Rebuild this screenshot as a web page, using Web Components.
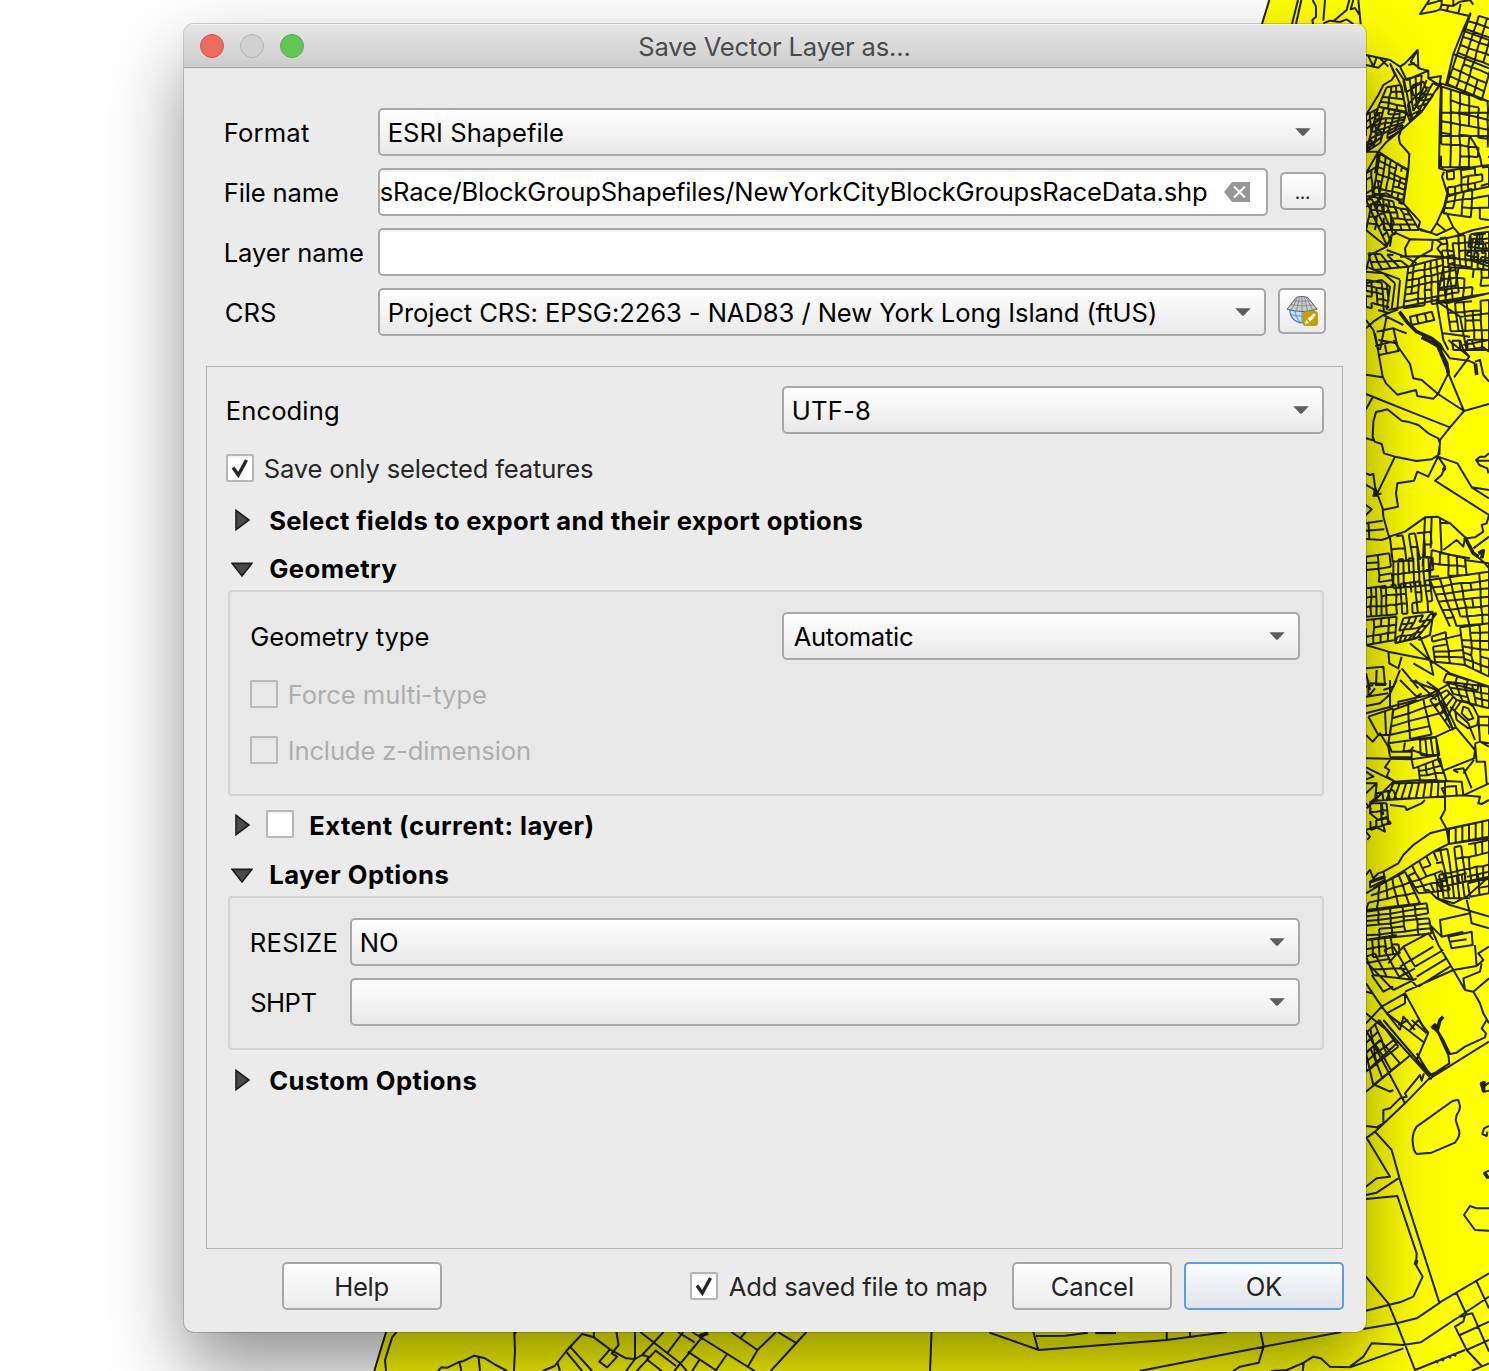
<!DOCTYPE html>
<html lang="en">
<head>
<meta charset="utf-8">
<title>Save Vector Layer as...</title>
<style>
html,body{margin:0;height:100%;overflow:hidden;background:#fff}
body{font-family:Inter,"Liberation Sans",sans-serif;font-size:25.6px;color:#000}
</style>
</head>
<body>
<map-desktop>
  <dialog-window>
    <ui-label slot="title" w="271">Save Vector Layer as...</ui-label>

    <form-row label="Format" lw="84"><combo-box tw="174" text="ESRI Shapefile" style="flex:1"></combo-box></form-row>
    <form-row label="File name" lw="113">
      <line-edit tw="827" text="sRace/BlockGroupShapefiles/NewYorkCityBlockGroupsRaceData.shp" clearable style="flex:1;margin-right:12px"></line-edit>
      <push-button style="width:46px;height:38px;margin-bottom:2px"><ui-label w="14" size="19" style="margin:1px 2px 0 0">...</ui-label></push-button>
    </form-row>
    <form-row label="Layer name" lw="138"><line-edit text="" style="flex:1"></line-edit></form-row>
    <form-row label="CRS" lw="50">
      <combo-box tw="766" text="Project CRS: EPSG:2263 - NAD83 / New York Long Island (ftUS)" style="flex:1;margin-right:12px"></combo-box>
      <push-button style="width:48px;height:46px;align-self:flex-start"><globe-icon></globe-icon></push-button>
    </form-row>

    <scroll-frame slot="options">
      <split-row label="Encoding" lw="111" lead="20" style="padding-right:18px"><combo-box tw="77" text="UTF-8" style="width:542px"></combo-box></split-row>
      <check-box checked tw="329" text="Save only selected features" style="margin:20px 0 0 19px"></check-box>
      <tree-header tw="593" text="Select fields to export and their export options" style="margin-top:14px"></tree-header>
      <tree-header open tw="127" text="Geometry"></tree-header>
      <group-panel style="height:206px;margin-top:-2px">
        <split-row label="Geometry type" lw="178" lead="20.5" style="padding-right:22px"><combo-box tw="120" text="Automatic" style="width:518px"></combo-box></split-row>
        <check-box disabled tw="197" text="Force multi-type" style="margin:20px 0 0 20px"></check-box>
        <check-box disabled tw="241" text="Include z-dimension" style="margin:28px 0 0 20px"></check-box>
      </group-panel>
      <tree-header box tw="283" text="Extent (current: layer)" style="margin-top:5px"></tree-header>
      <tree-header open tw="179" text="Layer Options" style="margin-top:1px"></tree-header>
      <group-panel style="height:154px;margin-top:-2px">
        <split-row label="RESIZE" lw="85.5" lead="21" style="padding-right:22px"><combo-box tw="37" text="NO" style="width:950px"></combo-box></split-row>
        <split-row label="SHPT" lw="66" lead="20.5" style="padding-right:22px;margin-top:12px"><combo-box text="" style="width:950px"></combo-box></split-row>
      </group-panel>
      <tree-header tw="207" text="Custom Options" style="margin-top:6px"></tree-header>
    </scroll-frame>

    <push-button slot="footer" style="width:160px"><ui-label w="53">Help</ui-label></push-button>
    <check-box slot="footer" checked tw="259" text="Add saved file to map" style="margin-left:248px;margin-right:25px"></check-box>
    <push-button slot="footer" style="width:160px"><ui-label w="82">Cancel</ui-label></push-button>
    <push-button slot="footer" primary style="width:160px;margin-left:12px"><ui-label w="36">OK</ui-label></push-button>
  </dialog-window>
</map-desktop>

<script>
const attr = (el, name, fallback = '') => el.hasAttribute(name) ? el.getAttribute(name) : fallback;
function define(name, render) {
  customElements.define(name, class extends HTMLElement {
    constructor() { super(); this.attachShadow({ mode: 'open' }); }
    connectedCallback() { this.shadowRoot.innerHTML = render(this); }
  });
}

/* Text run whose tracking is adjusted so that its ink spans exactly "w" pixels. */
const pen = document.createElement('canvas').getContext('2d');
customElements.define('ui-label', class extends HTMLElement {
  constructor() { super(); this.attachShadow({ mode: 'open' }); }
  connectedCallback() {
    const size = +attr(this, 'size', '25.6'), weight = attr(this, 'weight', '400'), w = +attr(this, 'w', '0');
    const text = this.textContent.trim();
    pen.font = `${weight} ${size}px Inter, "Liberation Sans", sans-serif`;
    const m = pen.measureText(text);
    const ink = m.actualBoundingBoxLeft + m.actualBoundingBoxRight;
    const ls = text.length > 1 && w ? (w - .8 - ink) / (text.length - 1) : 0;
    const nudge = weight === '700' ? 1.2 : .7;
    this.shadowRoot.innerHTML = `<style>
      :host{display:inline-block;flex:none;width:${w}px;height:30px;line-height:30px;white-space:nowrap;font-size:${size}px;font-weight:${weight};letter-spacing:${ls.toFixed(4)}px;position:relative;top:1px}
      span{display:inline-block;margin-left:${(m.actualBoundingBoxLeft + nudge).toFixed(2)}px}
    </style><span><slot></slot></span>`;
  }
});

define('form-row', el => `<style>
  :host{display:flex;align-items:center;height:48px;margin-bottom:12px}
  .l{display:flex;width:153px;padding-left:1px;flex:none}
  </style><div class="l"><ui-label w="${attr(el,'lw')}">${attr(el,'label')}</ui-label></div><slot></slot>`);

define('split-row', el => `<style>
  :host{display:flex;align-items:center;justify-content:space-between;height:48px;padding-left:${attr(el,'lead','0')}px}
  </style><ui-label w="${attr(el,'lw')}">${attr(el,'label')}</ui-label><slot></slot>`);

define('combo-box', el => `<style>
  :host{display:flex;align-items:center;justify-content:space-between;box-sizing:border-box;height:48px;flex:none;
    border:2px solid #a8a8a8;border-radius:5px;background:linear-gradient(#fff,#e9e9e9);padding:0 13px 0 9px}
  </style>${attr(el,'text') ? `<ui-label w="${attr(el,'tw')}">${attr(el,'text')}</ui-label>` : '<i></i>'}
  <svg width="16" height="8" viewBox="0 0 16 8"><path d="M.3.2H15.7L9 7.4Q8 8.2 7 7.4Z" fill="#5d5d5d"/></svg>`);

define('line-edit', el => `<style>
  :host{display:flex;align-items:center;justify-content:space-between;box-sizing:border-box;height:48px;
    border:2px solid #a8a8a8;border-radius:5px;background:#fff;box-shadow:inset 0 2px 1px #eee;padding:0 16px 2px 0;overflow:hidden}
  </style>${attr(el,'text') ? `<ui-label w="${attr(el,'tw')}">${attr(el,'text')}</ui-label>` : ''}
  ${el.hasAttribute('clearable') ? `<svg width="26" height="20" viewBox="0 0 26 20" style="margin-top:1px"><path d="M8 0H26V20H8L0 10Z" fill="#969696"/><path d="M10 4.5 21 15.5M21 4.5 10 15.5" stroke="#fff" stroke-width="2"/></svg>` : ''}`);

define('push-button', el => `<style>
  :host{display:flex;align-items:center;justify-content:center;box-sizing:border-box;flex:none;height:48px;color:#232323;
    border:2px solid ${el.hasAttribute('primary') ? '#5a9ee6' : '#a8a8a8'};border-radius:5px;
    background:linear-gradient(${el.hasAttribute('primary') ? '#fcfdfe,#dfe3ea' : '#fff,#ebebeb'})}
  </style><slot></slot>`);

define('tick-box', el => {
  const off = el.hasAttribute('disabled');
  return `<style>
  :host{display:block;box-sizing:border-box;width:28px;height:28px;flex:none;border:2px solid ${off ? '#b9b9b9' : '#b7b7b7'};border-radius:2px;
    background:${off ? '#e9e9e9' : '#fff'};box-shadow:inset 0 2px 1px ${off ? '#e1e1e1' : '#f3f3f3'}}
  svg{display:block}
  </style>${el.hasAttribute('checked') ? `<svg width="24" height="24" viewBox="0 0 24 24"><path d="M5 11.5 10.3 19 18.5 4" fill="none" stroke="#262626" stroke-width="3.4"/></svg>` : ''}`;
});

define('check-box', el => `<style>
  :host{display:flex;align-items:center;height:28px;gap:${el.hasAttribute('disabled') ? 11 : 10}px;color:${el.hasAttribute('disabled') ? '#aeaeae' : '#262626'}}
  </style><tick-box ${el.hasAttribute('checked') ? 'checked' : ''} ${el.hasAttribute('disabled') ? 'disabled' : ''}></tick-box><ui-label w="${attr(el,'tw')}">${attr(el,'text')}</ui-label>`);

define('tree-header', el => `<style>
  :host{display:flex;align-items:center;height:48px}
  .arrow{width:38px;padding-left:24px;flex:none;display:flex}
  .down{margin-top:3px}
  tick-box{margin:-3px 15px 0 -3px}
  </style><div class="arrow">${el.hasAttribute('open')
    ? '<svg class="down" width="22" height="16" viewBox="0 0 22 16"><path d="M1.2 1.4H20.8L11 14Z" fill="#4a4a4a" stroke="#1e1e1e" stroke-width="1.6"/></svg>'
    : '<svg width="22" height="22" viewBox="0 0 22 22"><path d="M5 1.3V20.7L18 11Z" fill="#4a4a4a" stroke="#1e1e1e" stroke-width="1.6"/></svg>'}</div>
  ${el.hasAttribute('box') ? '<tick-box></tick-box>' : ''}<ui-label weight="700" w="${attr(el,'tw')}">${attr(el,'text')}</ui-label>`);

define('group-panel', () => `<style>
  :host{display:flex;flex-direction:column;box-sizing:border-box;width:1096px;margin-left:21px;padding-top:20px;flex:none;
    border:2px solid #d4d4d4;border-radius:4px;background:#e8e8e8}
  </style><slot></slot>`);

define('scroll-frame', () => `<style>
  :host{display:flex;flex-direction:column;box-sizing:border-box;width:1137px;height:883px;margin-left:22px;padding-top:19px;border:1px solid #b2b2b2}
  </style><slot></slot>`);

define('globe-icon', () => `<style>:host{display:block;width:34px;height:32px;margin:2px 0 0 1px}svg{display:block}</style>
<svg width="34" height="32" viewBox="0 0 34 32">
  <circle cx="16" cy="14.8" r="12" fill="#c5e0f8" stroke="#3f83c4" stroke-width="1.3"/>
  <path d="M16 14V27M9 14Q9.5 22 14.5 26M23 14Q22.5 22 17.5 26M4.5 18.5Q15.5 22 27.5 18" fill="none" stroke="#5595cf"/>
  <path d="M10.5 1.2Q16-.4 21.5 1.2L31 13.2Q16 17.8 1 13.2Z" fill="#c9cbcd" stroke="#626466"/>
  <path d="M8 4.7Q16 6 24 4.7M4.5 8.8Q16 11 27.5 8.8M13.5 1 10.5 14.8M18.5 1 21.5 14.8M11.5 1 5.5 14M20.5 1 26.5 14M16 1V15" fill="none" stroke="#85878a" stroke-width=".9"/>
  <rect x="17" y="15.6" width="14.5" height="14" rx="2.3" fill="#c7a000" stroke="#b08c00" stroke-width=".7"/>
  <path d="M18.8 28 20.4 24 23.2 26.7ZM21.6 23 28 17.2 29.8 19 24.4 25.6Z" fill="#fff"/>
</svg>`);

define('dialog-window', () => `<style>
  :host{display:flex;flex-direction:column;box-sizing:border-box;width:1182px;height:1308px;margin:24px 0 0 184px;background:#ebebeb;border-radius:10px;flex:none;z-index:1;
    box-shadow:0 0 0 1px rgba(0,0,0,.18),0 36px 76px rgba(0,0,0,.43);overflow:hidden}
  header{height:44px;box-sizing:border-box;flex:none;border-bottom:1px solid #a6a6a6;background:linear-gradient(#e6e6e6,#cdcdcd);box-shadow:inset 0 1px 0 #f6f6f6;display:flex;align-items:center;padding:1px 0 0 16px;gap:16px;color:#4b4b4b}
  i{width:24px;height:24px;border-radius:50%;box-sizing:border-box;border:1px solid}
  .t{margin-left:318.5px;display:flex}
  .form{padding:40px 40px 0;flex:none;height:258px;box-sizing:content-box}
  .foot{display:flex;align-items:center;padding:13px 0 0 98px}
  </style>
  <header><i style="background:#ed6b5f;border-color:#d85046"></i><i style="background:#d1d1d1;border-color:#b3b3b3"></i><i style="background:#62c655;border-color:#51ad45"></i><div class="t"><slot name="title"></slot></div></header>
  <div class="form"><slot></slot></div>
  <slot name="options"></slot>
  <div class="foot"><slot name="footer"></slot></div>`);

/* Census block outlines: traced tiles plus subdivided street grids. */
const tiles = [
  { t: 'translate(1240 0) scale(.33333)', d: `
    M88,0L66,72M174,0L156,72M184,0L168,72M218,0L228,20 228,50 217,60 219,72M255,0L250,62M250,70L270,62 300,66 320,58 340,72M328,0L320,30 282,62M340,0L332,28 345,24 358,44M355,0L362,72
    M568,0L540,42 585,34 600,28 688,48M555,14L590,5 605,0M600,28L605,14 640,18 660,5 690,0M605,14V0M640,18V0M620,33L625,17M655,40L662,12M690,0L700,14
    M692,38L668,92 640,162 618,255 603,250 600,340 597,505 620,512 747,495M612,515L606,530 622,580 612,620 590,670 572,698 540,690
    M618,255L660,268 747,305M640,162L747,205M668,92L747,120M600,338H747M600,408H747M690,410Q720,450 725,497
    M378,165L450,180 480,200 495,190 533,150 535,205 565,212 565,235 603,228 598,255 565,305 545,335 515,362 484,390 476,410 480,430 508,462 505,510 490,610 540,665 535,685 572,698
    M378,345L415,285 430,255 455,240 465,225 450,190M450,190L485,260 498,330 510,365M468,205L492,240 515,350M533,150L512,185 540,205M505,195L525,190M480,200L500,240 565,212M515,265L520,285 535,295 560,270 550,245 520,255ZM565,235L598,255M545,335L525,315 555,285
    M484,390L440,425 415,455 378,455M415,455L500,510M415,455L378,520M415,455L405,520M385,168L400,200 410,172M378,195L415,203 440,180M420,175L445,200
    M378,690L440,740 455,705 470,700 510,718 590,720 640,710 700,690 747,680M510,718L495,745 498,772 530,790M578,722L575,750 530,775 510,800M440,740L390,765 378,810M440,750L500,772M455,705L450,740M590,720L605,730 592,745 610,770 565,768M572,698L590,705 640,682 620,640 608,640M590,670L615,690M640,682L660,705
    M480,840L472,925M465,850L455,930M430,820L465,850M378,815L430,820M378,850L425,840 450,860 440,930M445,930L590,900 620,910 747,880M480,838L378,800
    M475,928L430,945 400,965 378,985M378,960L400,990 415,1050M430,945L470,965 490,975M410,995L460,985 500,1000M415,1020L470,1030M440,950L420,1050M460,985L475,1050
    M590,905L610,1020 625,1050M610,1000L690,1010M600,910L660,950 747,940M660,950L680,1050
    M510,950L575,935 583,960 515,975ZM530,945L535,970M555,940L560,965
    M378,590L440,580 490,610M480,770L560,768 690,780 747,800`,
    fat: `M478,935L500,965 530,995 575,1015 600,1035 608,1050`,
    m: [[692,40,790,70,725,300,622,252,4,9,.04],[605,260,770,312,770,500,603,502,6,7,.28],[620,515,747,500,747,560,625,585,6,3,.2],[622,590,747,550,747,660,610,640,5,3,.2],
      [440,262,482,255,500,340,415,320,3,4,.1],[415,320,500,335,484,390,378,455,5,7,.1],[378,345,415,325,425,410,378,450,3,5,.1],[560,240,598,258,545,335,510,362,2,6,.05],[490,240,545,225,540,300,510,350,3,3,.2],
      [420,462,503,508,490,600,400,580,5,6,.15],[378,520,410,500,420,600,378,620,2,5,.15],[400,590,490,612,538,690,378,690,6,5,.2],[378,600,430,590,470,690,440,735,3,5,.2],
      [505,800,640,765,660,900,490,925,8,6,.15],[600,715,747,695,747,810,610,790,8,4,.2],[690,705,747,700,747,790,680,780,6,6,.15],[610,800,747,810,747,880,590,905,6,3,.2],[620,910,747,900,747,1050,640,1050,5,5,.2],
      [385,760,460,765,505,800,400,810,4,2,.1],[378,840,440,850,450,940,378,920,4,5,.2]] },
  { t: 'translate(1350 340) scale(.33333)', d: `
    M75,-20L98,110 108,130 142,164 198,150 202,168 250,176 264,162 295,100 262,20 215,-8M98,112L48,104M88,45L148,32M105,15L110,40M75,18L125,5
    M130,0L180,72 190,115 215,120 264,162 342,213M295,0L358,50 312,112M265,10L300,55 355,62M262,20L342,213 417,192M342,213L300,262 270,300 268,345
    M48,162L180,215 300,262M68,172L48,208M112,208L95,212 78,216 70,245 68,290 74,305 95,312 102,340 135,350 200,363 245,358 265,345 270,310 265,295 235,280 205,255 180,247 155,242Z
    M48,295L74,302M135,350L82,460M48,400L60,405 70,402 75,440 82,462 98,505 100,530 118,595M48,435L75,450 70,468 95,460M48,495L65,508 48,525
    M264,350L235,410 202,395 192,422 142,430 138,460 144,500 98,510M264,350L285,380 275,405 255,422 417,525 410,550 395,555 400,575 375,592 350,595M264,350L322,370 365,442 417,450M365,442L417,475
    M417,340L405,350 390,350 378,360 388,375 412,385 415,400M380,362H417
    M118,590L165,575 225,532 262,530 300,550 345,592 370,640 400,665 417,685M48,550L98,542M48,572L103,568M48,597L95,600 118,592M55,545L58,597
    M330,0L340,30 358,50M340,15L417,0M345,30L400,22 417,35M365,0L375,25M375,65L390,60 400,105 417,125M355,62L375,70M370,625L417,590M225,532L218,680M245,532L242,625M270,535L275,640 360,655M270,548L295,550M280,630L320,600 340,620 345,592
    M48,915L115,935 240,960 300,1000 417,1040M48,985L100,980 105,1035M115,935L118,970 145,985 155,950M155,985L205,1045M180,910L250,970M80,990L78,1035 108,1035M48,1000L60,1050M150,990L130,1040 100,1050M190,970L250,1005 240,960M135,910L210,890 240,960M205,900L240,885 250,820`,
    fat: `M215,-8L262,15 290,70 295,100M345,592L370,640 385,650M376,70L380,105M385,640L400,632 395,655M285,382L280,392M75,450L80,470`,
    m: [[120,592,195,580,210,660,128,665,4,2,.1],[200,580,242,575,250,690,205,690,2,3,.2],[245,630,345,655,350,705,240,710,4,2,.1],[48,650,118,640,130,740,48,750,2,5,.1],[130,660,235,650,240,735,130,745,7,2,.1],
      [48,745,240,720,250,815,48,830,13,3,.15],[240,720,417,695,417,770,265,785,6,3,.1],[265,785,417,770,417,850,300,860,6,3,.1],[160,835,260,820,200,895,135,910,5,4,.1],[48,840,140,830,135,900,48,915,4,3,.15],
      [245,890,330,862,345,975,255,965,2,5,.08],[330,862,417,850,417,1010,345,975,3,6,.08],[345,660,417,670,417,695,350,705,2,1,.1],[290,1000,417,1040,417,1060,280,1025,4,1,.1]] },
  { t: 'translate(1350 680) scale(.33333)', d: `
    M48,78L90,70 118,45 140,0M120,0V85M145,82V65L235,45 265,30M48,100L200,60M180,0L260,30 270,70 310,150M55,0V50L75,25M60,10L110,12M48,50L115,40M150,0L200,50 215,40M48,20L70,15M230,5L265,30 300,10M195,0L260,60
    M258,170L318,142 375,210 372,235 280,272 265,240ZM265,30L318,142M300,80L355,130 375,180
    M335,62L315,90 320,120 355,145 382,135 385,110 370,80 350,65ZM340,80L335,100 355,120 370,115 355,85Z
    M48,165L68,185 90,160 115,200 120,230M115,190L258,170M48,235L185,238 270,225M120,240L105,262 118,270 110,290 135,305 210,300 335,305 340,345M115,190L125,215 180,215 190,200M165,188L160,215 185,210M120,232H185V210L230,225
    M185,238L190,265 205,260 210,300M280,272L290,305M375,190L380,245 405,245 410,310M385,120L390,185 375,190M390,185L417,200M310,270L340,265 365,325M310,270L325,278M340,280L372,240
    M48,262L135,305M48,275L70,290 48,298M130,305L75,360 50,385M290,320L318,318 320,345M285,345L275,325 290,320M75,362L340,346 417,310M340,346L390,350 385,370 395,372 417,360M75,362L80,310 48,340M48,310L80,310
    M48,370L62,385 60,400 85,420 110,415 122,430 100,435 105,455 75,440 48,450M48,455L60,470 52,480M95,370L100,405M120,375L165,380 170,390 215,370 225,360
    M285,350V390L272,415 290,447 417,420M290,447L240,460 190,495 160,525 145,550 100,575 105,595M48,640L165,570 250,515 295,492 417,475M290,447L297,492
    M100,575L85,580 70,595 60,570 48,585M60,605L100,590 105,600 60,622ZM220,630L235,630 260,655 300,675 417,710M260,655L310,670 350,650 417,590
    M240,735L265,795 310,870 345,930 370,935 390,970 400,1000 417,1030M160,800L235,760 250,780M150,860L250,800M115,850L160,800 195,860M165,935L310,870 380,858 375,795M195,860L280,810M200,890L290,835M205,920L300,860M150,860L200,920M150,860L165,880 150,890M150,890L195,865M48,910L95,980 165,940 225,1050M165,940V970L110,1000M130,930L200,895
    M295,770L365,755 368,795 305,805ZM300,785L350,778M350,660L360,700 365,730 417,745M370,935L417,895M380,858L400,840 385,820 417,800M345,930L340,895 390,875 395,850M360,700L270,720 275,770 240,735M275,770L340,755
    M95,980L48,1030M95,980L150,1050M48,1000L110,1050M48,935L65,940M150,1050L160,1010 195,1050M110,1000L150,1030M65,885L100,935 130,920M48,845L130,930`,
    fat: `M245,1045L255,1035 262,1050 270,1020 280,1010M60,370L75,358M110,428L122,430M62,605L100,592`,
    m: [[55,110,130,85,120,165,85,165,3,1,.05],[130,90,265,40,310,150,115,190,3,4,.2],[290,5,417,20,417,85,320,60,5,3,.1],[240,60,290,30,330,70,300,145,1,4,.1],[210,180,258,172,268,225,212,225,3,1,0],[205,260,270,235,285,300,210,300,3,3,.2],[385,110,417,110,417,190,390,185,1,3,.1],
      [130,310,285,305,285,350,110,358,8,1,0],[80,340,130,330,140,358,80,362,3,1,0],[60,370,110,370,115,430,62,450,3,3,.15],
      [297,447,417,420,417,470,297,492,6,1,0],[250,515,417,480,417,590,275,620,8,3,.15],[165,570,250,515,300,630,205,640,4,4,.15],[70,625,165,575,210,670,48,690,5,3,.15],[260,600,350,580,360,655,265,655,6,1,.1],
      [48,695,230,670,245,760,48,780,5,6,.05],[48,780,140,765,150,820,48,835,5,2,.1],[350,590,417,575,417,640,360,650,2,3,.1],[48,830,130,800,190,900,70,885,3,3,.1]] },
  { t: 'translate(1350 1020) scale(.33333)', d: `
    M165,250L235,178 417,65M48,355L75,335 165,250M75,335L125,390 150,480 268,848 417,760M48,318L80,322 100,310 100,270 120,265 150,235 170,230 165,220 210,165 215,182 222,160
    M85,0L245,178M100,0L240,165M48,30L165,250M135,0L225,70M185,0L230,40M145,15L175,0M180,30L205,0M205,0L235,38 200,120 245,165 298,130 295,105 265,40 248,20 260,30M200,100L240,165 285,145M270,0L262,30 280,60 300,102 320,98 345,80 405,52 408,40 395,25 410,0
    M48,215L182,105M75,195L120,215 130,210M48,155L135,75M130,60L140,70 130,80
    M48,350L120,470 80,475 48,500M145,475L80,518 48,525M48,537L142,528 200,700 198,735 218,770 190,830 155,845 115,855 48,872M48,770L115,850 140,910 195,1050 345,990
    M325,240Q308,240 295,252L200,320Q186,340 188,365 190,395 200,402L245,398 315,368Q330,350 328,335L317,300 320,285Q334,268 328,250ZM417,188L400,200 392,192 400,215 417,212M417,318L402,325 397,342 410,348 412,335M417,452L403,458 417,475M417,565L380,565 360,558 342,585 375,630 417,632
    M40,927L140,910 200,895 270,848M0,1040L40,1010 65,970 160,975 212,967 380,855 417,830M0,1042L160,985
    M320,820L350,885M380,785L417,865M345,885L367,880 417,995M345,885L340,905 315,920 350,990 395,1038M330,945L417,905M350,990L417,960M345,888L325,890M365,1052L417,1030`,
    fat: `M392,192L402,188 400,215M403,458L415,475M247,20L262,30M200,720L196,735M258,1028L262,1022M275,1022L280,1016M296,1014L300,1008M312,1008L316,1002`,
    m: [[48,40,88,0,145,80,48,155,3,4,.1],[48,100,90,60,150,130,70,195,3,2,.1]] },
  { t: 'translate(360 1310) scale(.357143 .333333)', d: `
    M73,66L40,183M102,66L90,82 70,150 73,183M432,66L434,120 431,183M218,183L228,172 245,173 275,157 290,153 320,137 350,145 380,165 412,183M278,155L284,183M332,142L336,183M512,183L545,168 580,120 622,72 655,82 700,118 745,145 770,147 790,135 808,140 800,155M655,82V66M577,125L622,183M590,112L650,183M553,158L560,183M718,66L724,105 705,130 720,140 692,172 670,155 700,118M770,66V147L745,183
    M785,66L895,158 915,183M850,66L790,135M775,183L828,122 885,168M905,66L862,127M890,66L937,97M970,66L880,183M930,66L1105,183M918,125L1000,183M1028,132L995,183M950,150L930,183M1040,66L1113,120 1165,66M1080,66L1067,82M1113,120L1085,172M1170,66L1220,98M1250,66L1150,183M805,150L845,183`, fat: 'M432,66L438,69M950,78L975,70', m: [] },
  { t: 'translate(900 1310) scale(.375637 .333333)', d: `
    M84,66L80,183M238,68L370,120 710,90 870,66M355,66L368,120M362,78L440,77 500,68M710,66V90M772,66V80M638,183L968,110 1175,66M960,66L968,110 955,158 905,170 887,183M988,183L1030,180 1075,158 1100,140 1120,145 1145,170 1198,172M1075,158L1072,183`, fat: 'M520,67H575', m: [] }
];
let seed = 7;
const rnd = () => (seed = (seed * 16807) % 2147483647) / 2147483647;
/* Subdivides a quad (clockwise corners) into cols x rows blocks, leaving out a share of the edges. */
function mesh([ax, ay, bx, by, cx, cy, dx, dy, cols, rows, skip]) {
  const points = {};
  const P = (i, j) => {
    const k = i + ',' + j;
    if (!points[k]) {
      const u = i / cols, v = j / rows, e = (i % cols && j % rows) ? 4 : 0;
      points[k] = [(ax * (1 - u) + bx * u) * (1 - v) + (dx * (1 - u) + cx * u) * v + (rnd() - .5) * e,
                   (ay * (1 - u) + by * u) * (1 - v) + (dy * (1 - u) + cy * u) * v + (rnd() - .5) * e].map(n => n.toFixed(1));
    }
    return points[k];
  };
  let d = '';
  for (let j = 0; j <= rows; j++) for (let i = 0; i <= cols; i++) {
    if (i < cols && rnd() >= skip) d += `M${P(i, j)}L${P(i + 1, j)}`;
    if (j < rows && rnd() >= skip) d += `M${P(i, j)}L${P(i, j + 1)}`;
  }
  return d;
}
define('map-desktop', () => `<style>
  :host{display:grid;width:1489px;height:1371px;overflow:hidden;background:#fff}
  svg,slot{grid-area:1/1}
  svg{display:block}
  ::slotted(*){grid-area:1/1}
  path{fill:none;stroke:#212121;stroke-width:2;vector-effect:non-scaling-stroke;stroke-linejoin:round}
  .fat{stroke-width:3.6}
  </style><svg width="1489" height="1371" viewBox="0 0 1489 1371"><polygon points="1270,0 1489,0 1489,1371 374,1371 386,1332 500,1000 1262,24" fill="#ff0"/>
  ${tiles.map(k => `<g transform="${k.t}"><path d="${k.d}${k.m.map(mesh).join('')}"/><path class="fat" d="${k.fat}"/></g>`).join('')}</svg><slot></slot>`);
</script>
</body>
</html>
